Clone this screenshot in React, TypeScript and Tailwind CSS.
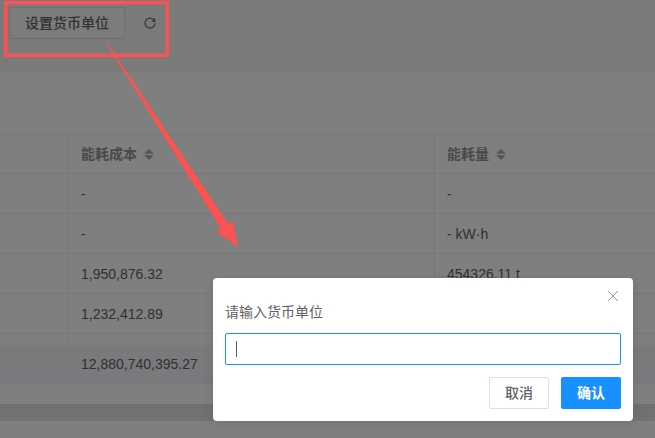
const rows = [
  { cost: '-', amount: '-' },
  { cost: '-', amount: '- kW·h' },
  { cost: '1,950,876.32', amount: '454326.11 t' },
  { cost: '1,232,412.89', amount: '' },
]

function SortCaret() {
  return (
    <svg width="10" height="11" viewBox="0 0 10 11" className="ml-[7px] shrink-0" fill="#a8abb0">
      <path d="M5 0 L10 4.7 L0 4.7 Z" />
      <path d="M0 6.3 L10 6.3 L5 11 Z" />
    </svg>
  )
}

function RefreshIcon() {
  return (
    <svg width="14" height="14" viewBox="0 0 14 14" fill="none" stroke="#606266" strokeWidth="1.1">
      <path d="M11.6 5.2 A5 5 0 1 0 12 7.2" />
      <path d="M11.9 2.2 L11.7 5.4 L8.6 5.2" />
    </svg>
  )
}

function HeaderCell({ label, className }: { label: string; className: string }) {
  return (
    <div className={`flex items-center pl-3 text-sm font-bold text-[#909399] ${className}`}>
      {label}
      <SortCaret />
    </div>
  )
}

export default function App() {
  return (
    <div
      className="relative h-[438px] w-[655px] overflow-hidden bg-white text-sm"
      style={{ fontFamily: '"Liberation Sans", "Noto Sans CJK SC", sans-serif' }}
    >
      {/* toolbar */}
      <div className="flex h-[72px] items-start border-b border-[#ebeef5] bg-[#f5f5f5] pl-[9px] pt-[7px]">
        <button className="h-8 w-[116px] rounded-[2px] border border-[#dcdfe6] bg-[#f8f8f8] font-medium text-[#606266]">
          设置货币单位
        </button>
        <div className="ml-[18px] mt-[9px]">
          <RefreshIcon />
        </div>
      </div>

      <div className="h-[62px]" />

      {/* table */}
      <div className="border-t border-[#ebeef5]">
        <div className="flex h-[39px] border-b border-[#ebeef5]">
          <div className="w-[69px] border-r border-[#ebeef5]" />
          <HeaderCell label="能耗成本" className="w-[366px] border-r border-[#ebeef5]" />
          <HeaderCell label="能耗量" className="flex-1" />
        </div>
        {rows.map((row, i) => (
          <div key={i} className="flex h-10 border-b border-[#ebeef5] text-[#606266]">
            <div className="w-[69px] border-r border-[#ebeef5]" />
            <div className="flex w-[366px] items-center border-r border-[#ebeef5] pl-3">{row.cost}</div>
            <div className="flex flex-1 items-center pl-3">{row.amount}</div>
          </div>
        ))}
        <div className="flex h-[11px]">
          <div className="w-[69px] border-r border-[#ebeef5]" />
          <div className="w-[366px] border-r border-[#ebeef5]" />
        </div>
        <div className="flex h-[39px] border-b border-[#ebeef5] bg-[#f3f4f6] text-[#606266]">
          <div className="w-[69px] border-r border-[#ebeef5]" />
          <div className="flex w-[366px] items-center border-r border-[#ebeef5] pl-3">12,880,740,395.27</div>
        </div>
      </div>

      <div className="h-5" />
      <div className="h-[17px] bg-gradient-to-b from-[#e0e0e0] to-[#e6e6e6]" />

      {/* dimmed backdrop */}
      <div className="absolute inset-0 bg-black/50" />

      {/* annotation */}
      <svg width="655" height="438" className="absolute inset-0" fill="#fb5252">
        <rect x="5.75" y="2.75" width="161.5" height="52.5" fill="none" stroke="#fb5252" strokeWidth="3.5" />
        <path d="M105.5 42 L106.5 41.5 L228.5 224 L232.7 220.7 L238.3 247 L216 231.7 L221 228.5 Z" />
      </svg>

      {/* dialog */}
      <div className="absolute left-[213px] top-[278px] flex h-[143px] w-[420px] flex-col rounded bg-white px-3 shadow-[0_2px_12px_rgba(0,0,0,0.1)]">
        <div className="absolute right-[14px] top-[12px]">
          <svg width="12" height="12" viewBox="0 0 12 12" stroke="#909399" strokeWidth="1">
            <path d="M1 1 L11 11 M11 1 L1 11" />
          </svg>
        </div>
        <div className="mt-[26px] leading-4 text-[#606266]">请输入货币单位</div>
        <div className="mt-[13px] flex h-8 w-[396px] items-center rounded-[2px] border border-[#1890ff] pl-[10px]">
          <div className="h-4 w-px bg-[#606266]" />
        </div>
        <div className="mt-3 flex justify-end gap-3">
          <button className="h-8 w-[60px] rounded-[2px] border border-[#dcdfe6] bg-white font-medium text-[#606266]">
            取消
          </button>
          <button className="h-8 w-[60px] rounded-[2px] bg-[#1890ff] font-bold text-white">确认</button>
        </div>
      </div>
    </div>
  )
}
